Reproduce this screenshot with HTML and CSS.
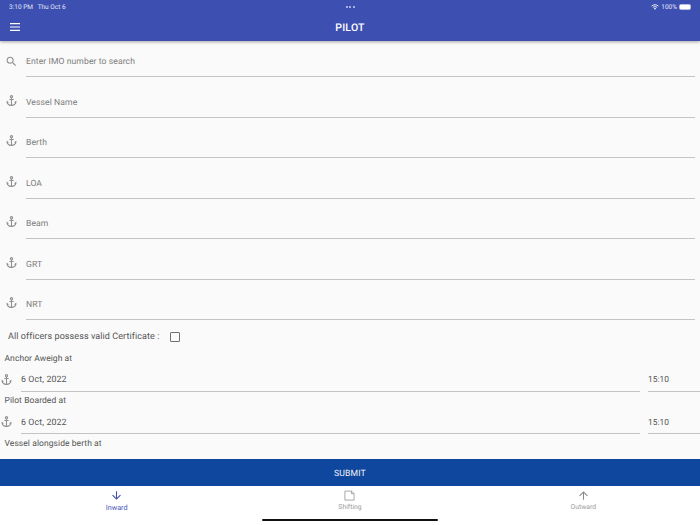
FILE: index.html
```html
<!DOCTYPE html>
<html lang="en">
<head>
<meta charset="utf-8">
<title>Pilot</title>
<link rel="stylesheet" href="styles.css">
</head>
<body>
<svg class="defs" width="0" height="0" aria-hidden="true">
  <symbol id="anchor" viewBox="0 0 24 24"><path d="M17 15l1.550 1.550c-.96 1.690-3.330 3.040-5.550 3.370V11h3V9h-3V7.820C14.160 7.400 15 6.300 15 5c0-1.650-1.350-3-3-3S9 3.350 9 5c0 1.300.84 2.400 2 2.820V9H8v2h3v8.920c-2.220-.33-4.590-1.680-5.550-3.370L7 15l-4-3v3c0 3.880 4.920 7 9 7s9-3.120 9-7v-3l-4 3zM12 4c.55 0 1 .45 1 1s-.45 1-1 1-1-.45-1-1 .45-1 1-1z"/></symbol>
</svg>
<div class="app">
  <header class="topbar">
    <div class="status">
      <span class="status-left">3:10 PM&nbsp;&nbsp; Thu Oct 6</span>
      <span class="status-dots"><i></i><i></i><i></i></span>
      <span class="status-right">
        <svg class="wifi" viewBox="0 0 12 9"><path d="M.8 3.200C3.800.4 8.200.4 11.200 3.200M2.800 5.200c2-1.700 4.400-1.700 6.400 0"/><path class="wifi-dot" d="M4.500 6.700c1-.7 2-.7 3 0L6 8.500z"/></svg>
        100%
        <span class="battery"><span></span></span>
      </span>
    </div>
    <div class="titlebar">
      <svg class="menu" viewBox="0 0 10 8"><path d="M0 0h10v1.200H0zM0 3.400h10v1.200H0zM0 6.800h10V8H0z"/></svg>
      <h1>PILOT</h1>
    </div>
  </header>
  <main class="form">
    <div class="field">
      <svg class="ico" viewBox="0 0 24 24"><path d="M15.500 14h-.79l-.28-.27A6.471 6.471 0 0 0 16 9.500 6.500 6.500 0 1 0 9.500 16c1.610 0 3.090-.59 4.230-1.570l.27.28v.79l5 4.990L20.490 19l-4.990-5zm-6 0C7.010 14 5 11.990 5 9.500S7.010 5 9.500 5 14 7.010 14 9.500 11.990 14 9.500 14z"/></svg>
      <div class="input">Enter IMO number to search</div>
    </div>
    <div class="field"><svg class="ico"><use href="#anchor"/></svg><div class="input">Vessel Name</div></div>
    <div class="field"><svg class="ico"><use href="#anchor"/></svg><div class="input">Berth</div></div>
    <div class="field"><svg class="ico"><use href="#anchor"/></svg><div class="input">LOA</div></div>
    <div class="field"><svg class="ico"><use href="#anchor"/></svg><div class="input">Beam</div></div>
    <div class="field"><svg class="ico"><use href="#anchor"/></svg><div class="input">GRT</div></div>
    <div class="field"><svg class="ico"><use href="#anchor"/></svg><div class="input">NRT</div></div>
    <div class="cert"><span>All officers possess valid Certificate :</span><span class="check"></span></div>
    <div class="label first">Anchor Aweigh at</div>
    <div class="dt">
      <svg class="ico small"><use href="#anchor"/></svg>
      <div class="val date">6 Oct, 2022</div>
      <div class="val time">15:10</div>
    </div>
    <div class="label">Pilot Boarded at</div>
    <div class="dt">
      <svg class="ico small"><use href="#anchor"/></svg>
      <div class="val date">6 Oct, 2022</div>
      <div class="val time">15:10</div>
    </div>
    <div class="label">Vessel alongside berth at</div>
  </main>
  <button class="submit">SUBMIT</button>
  <nav class="tabs">
    <div class="tab active">
      <svg viewBox="0 0 24 24"><path d="M20 12l-1.410-1.410L13 16.170V4h-2v12.170l-5.580-5.590L4 12l8 8 8-8z"/></svg>
      <span>Inward</span>
    </div>
    <div class="tab">
      <svg class="docicon" viewBox="0 0 12 12"><path d="M1 1.200h7.200L11 4v7H1z"/><path d="M8.200 1.200V4H11"/></svg>
      <span>Shifting</span>
    </div>
    <div class="tab">
      <svg viewBox="0 0 24 24"><path d="M4 12l1.410 1.410L11 7.830V20h2V7.830l5.580 5.590L20 12l-8-8-8 8z"/></svg>
      <span>Outward</span>
    </div>
  </nav>
  <div class="home"></div>
</div>
</body>
</html>
```
FILE: styles.css
```css
* { box-sizing: border-box; }
html, body { margin: 0; padding: 0; }
body { width: 700px; height: 525px; overflow: hidden; background: #fff; font-family: Roboto, "Liberation Sans", sans-serif; text-rendering: geometricPrecision; }
button { text-rendering: geometricPrecision; }
.defs { display: block; height: 0; }
.app { width: 700px; height: 525px; display: flex; flex-direction: column; position: relative; }

.topbar { height: 41px; background: #3d50b2; color: #fff; box-shadow: 0 1px 3px rgba(0,0,0,.35); flex: none; position: relative; z-index: 1; }
.status { height: 13px; padding: 0 9px; display: flex; align-items: center; justify-content: space-between; font-size: 6.500px; color: #e4e7f6; }
.status-left { width: 200px; }
.status-dots { display: flex; gap: 1.500px; }
.status-dots i { width: 2px; height: 2px; border-radius: 50%; background: #c9cfec; }
.status-right { width: 200px; display: flex; align-items: center; justify-content: flex-end; gap: 2px; }
.wifi { width: 8px; height: 6px; fill: none; stroke: #fff; stroke-width: 1.300; }
.wifi-dot { fill: #fff; stroke: none; }
.battery { width: 12px; height: 6px; border: 1px solid #b9c1e6; border-radius: 1.500px; display: block; }
.battery span { display: block; height: 100%; background: #fff; }
.titlebar { height: 28px; display: flex; align-items: center; justify-content: center; position: relative; }
.titlebar h1 { margin: 0; font-size: 10.500px; font-weight: 500; letter-spacing: .2px; color: #fff; }
.menu { position: absolute; left: 10px; top: 10px; width: 10px; height: 8px; fill: #fff; }

.form { flex: 1; min-height: 0; background: #fafafa; overflow: hidden; display: flex; flex-direction: column; }
.field { height: 40.500px; flex: none; display: flex; align-items: stretch; padding: 0 5px; }
.field:first-child { height: 36px; }
.ico { width: 13px; height: 13px; fill: #909090; flex: none; }
.field .ico { margin: 16.500px 0 0; }
.field:first-child .ico { margin-top: 13.500px; }
.input { flex: 1; margin-left: 8px; border-bottom: 1px solid #c4c4c4; font-size: 8.600px; color: #7d7d7d; display: flex; align-items: flex-end; padding-bottom: 9px; letter-spacing: .08px; }
.cert { height: 34px; flex: none; display: flex; align-items: center; padding-left: 8px; gap: 11px; font-size: 9px; color: #555; letter-spacing: .08px; }
.check { width: 10px; height: 10px; border: 1px solid #6f6f6f; border-radius: 1px; display: block; }
.label { height: 14px; flex: none; padding: 1.500px 0 0 4.500px; font-size: 8.500px; color: #555; letter-spacing: .07px; line-height: 12px; }
.label.first { margin-top: -3px; padding-top: 2px; }
.dt { height: 28.500px; flex: none; display: flex; margin-top: -2px; margin-bottom: 2px; }
.ico.small { margin: 9.500px 0 0; }
.val { font-size: 8.800px; color: #555; border-bottom: 1px solid #c4c4c4; display: flex; align-items: flex-end; padding-bottom: 5.500px; letter-spacing: .12px; }
.date { flex: 1; margin-left: 8px; }
.time { width: 52px; margin-left: 8px; font-size: 8.400px; letter-spacing: 0; }

.submit { height: 27px; flex: none; width: 100%; border: 0; background: #0e479d; color: #f2f4f9; font: 400 8.700px Roboto, "Liberation Sans", sans-serif; letter-spacing: .1px; padding: 2px 0 0; }
.tabs { height: 39px; flex: none; display: flex; background: #fff; padding-top: 3px; }
.tab { flex: 1; display: flex; flex-direction: column; align-items: center; font-size: 6.800px; color: #9a9a9a; }
.tab svg { width: 13px; height: 13px; fill: #8a8a8a; margin-bottom: 1px; }
.tab.active { color: #4a5cbc; font-size: 7.300px; }
.tab.active svg { fill: #3d50b2; }
.tab svg.docicon { fill: none; stroke: #8a8a8a; stroke-width: .8; width: 11px; height: 11px; margin: 1px 0 2px; }
.home { position: absolute; left: 262px; bottom: 4px; width: 176px; height: 2.500px; border-radius: 2px; background: #111; }
```
